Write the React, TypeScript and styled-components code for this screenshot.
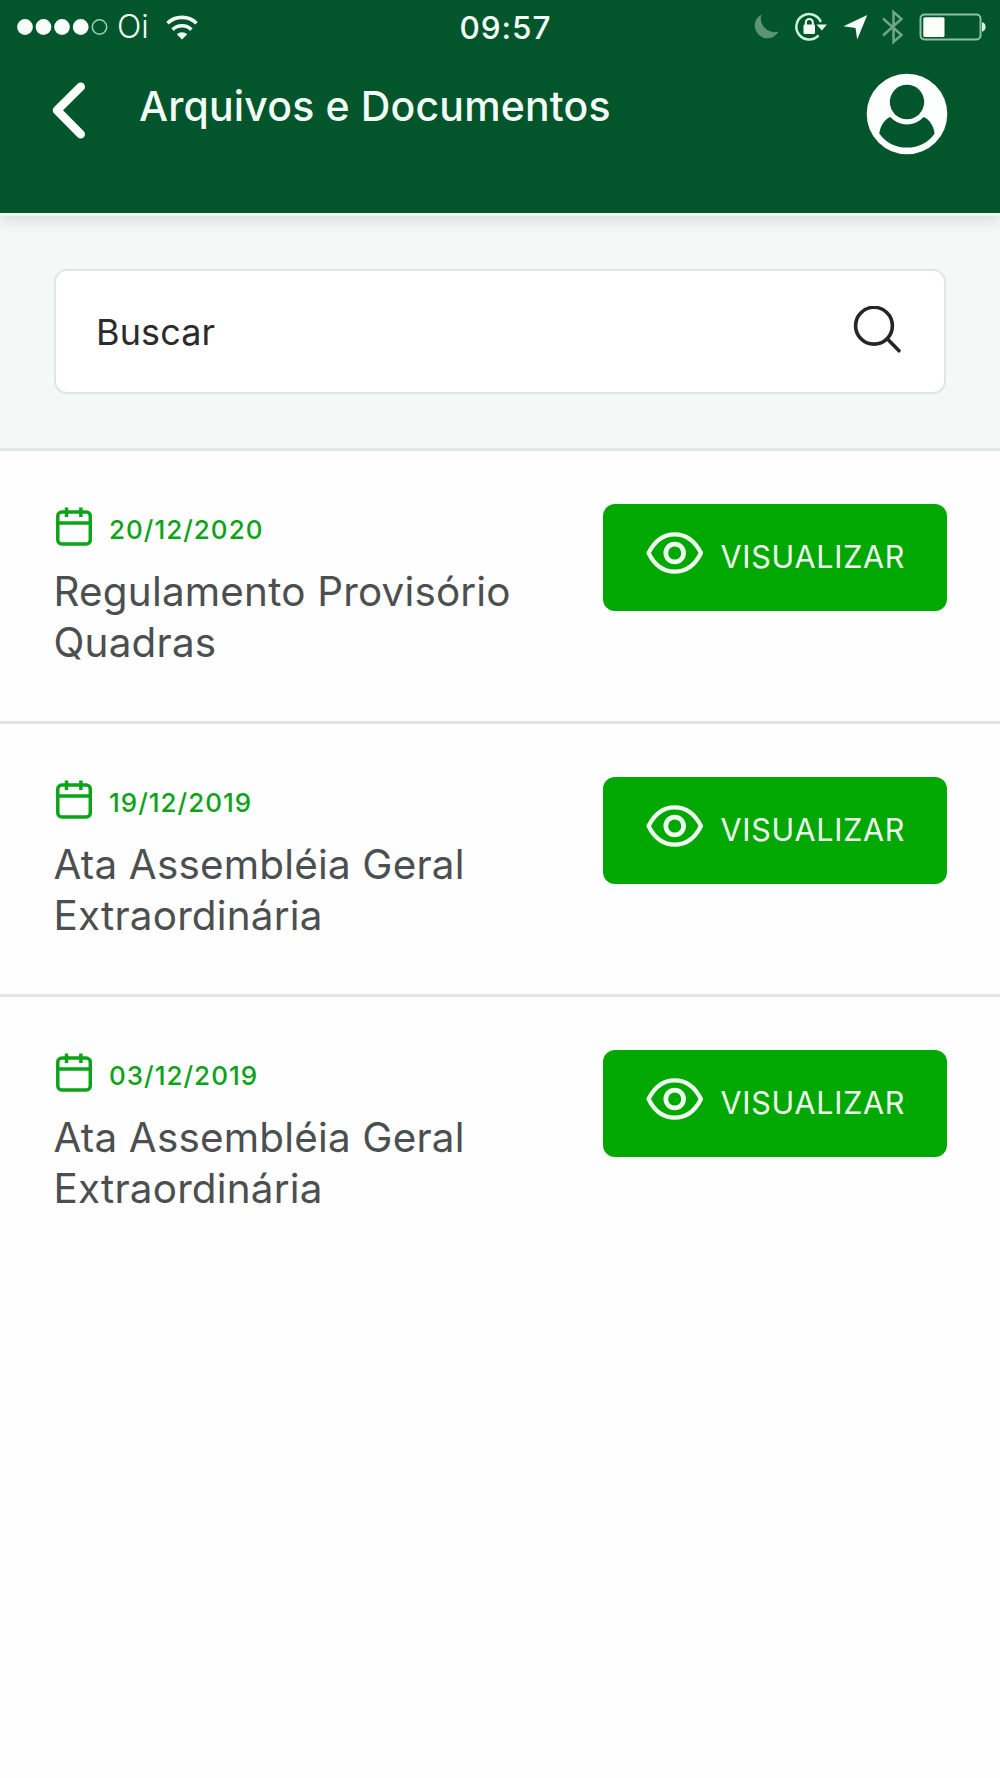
import React from "react";
import styled, { createGlobalStyle } from "styled-components";

const GlobalStyle = createGlobalStyle`
  * { box-sizing: border-box; }
  body {
    margin: 0;
    background: #fefefe;
    font-family: Inter, "Liberation Sans", sans-serif;
  }
  svg { display: block; flex: none; }
`;

const Screen = styled.div`
  width: 1000px;
  min-height: 1778px;
  background: #fefefe;
`;

const Header = styled.header`
  position: relative;
  z-index: 1;
  height: 213px;
  background: #03552c;
  box-shadow: 0 3px 0 #edf9f5, 0 10px 12px -1px rgba(0, 0, 0, 0.1);
`;

const StatusBar = styled.div`
  display: grid;
  grid-template-columns: 1fr auto 1fr;
  align-items: center;
  height: 54px;
  padding: 0 13px 0 16px;
  color: #f4fff8;
`;

const Carrier = styled.div`
  display: flex;
  align-items: center;
`;

const CarrierName = styled.span`
  margin: 0 16px 0 7px;
  font-size: 32px;
  font-weight: 300;
  line-height: 38px;
`;

const Clock = styled.time`
  padding: 1px 0 0 8px;
  font-size: 31.5px;
  font-weight: 500;
  line-height: 38px;
  letter-spacing: 1px;
`;

const StatusIcons = styled.div`
  display: flex;
  justify-content: flex-end;
`;

const NavBar = styled.nav`
  display: flex;
  align-items: flex-start;
  padding: 19px 52px 0;
`;

const IconButton = styled.button`
  padding: 0;
  border: 0;
  background: none;
`;

const BackButton = styled(IconButton)`
  margin-top: 8px;
`;

const PageTitle = styled.h1`
  flex: 1;
  margin: 8px 0 0 53px;
  color: #f4fff8;
  font-size: 41px;
  font-weight: 500;
  line-height: 50px;
  letter-spacing: 0.16px;
  white-space: nowrap;
`;

const SearchPanel = styled.section`
  height: 238px;
  padding: 56px 54px 0;
  background: #f4f8f7;
  border-bottom: 3px solid #dfe7e5;
`;

const SearchField = styled.label`
  display: flex;
  align-items: center;
  justify-content: space-between;
  height: 125px;
  padding: 0 42px 2px 40px;
  background: #fff;
  border: 2.5px solid #dde7e4;
  border-radius: 13px;
`;

const SearchText = styled.span`
  padding-top: 2px;
  color: #2b2b2b;
  font-size: 36px;
  line-height: 44px;
  letter-spacing: 0.1px;
`;

const List = styled.ul`
  margin: 0;
  padding: 0;
  list-style: none;
`;

const Row = styled.li`
  display: flex;
  justify-content: space-between;
  align-items: flex-start;
  height: 273px;
  padding: 53px 53px 0 54px;
  border-bottom: 3px solid #dfe6e5;

  &:last-child { border-bottom: 0; }
`;

const Details = styled.div`
  width: 500px;
`;

const DateLine = styled.div`
  display: flex;
  align-items: center;
  gap: 17px;
  height: 44px;
  padding-left: 2px;
  color: #0ba318;
`;

const DateText = styled.time`
  padding-top: 7px;
  font-size: 26px;
  font-weight: 500;
  line-height: 32px;
  letter-spacing: 1px;
`;

const DocumentName = styled.h2`
  margin: 18px 0 0 -0.5px;
  color: #4c4f50;
  font-size: 40.4px;
  font-weight: 400;
  line-height: 51px;
  letter-spacing: 0.2px;
  white-space: pre-line;
`;

const ViewButton = styled.button`
  display: flex;
  align-items: center;
  width: 344px;
  height: 107px;
  padding: 0 0 2px 43px;
  border: 0;
  border-radius: 12px;
  background: #02a802;
  color: #f0fff0;
`;

const ButtonLabel = styled.span`
  margin-left: 16.5px;
  font-family: Inter, "Liberation Sans", sans-serif;
  font-size: 30.5px;
  font-weight: 400;
  line-height: 38px;
  letter-spacing: 0.75px;
`;

const EyeSlot = styled.span`
  margin-bottom: 7px;
`;

const SignalIcon = () => (
  <svg width="94" height="18" viewBox="16 18 94 18">
    {[25, 43.5, 62, 80.7].map((x) => (
      <circle key={x} cx={x} cy="27" r="7.9" fill="#f8fffb" />
    ))}
    <circle cx="99.5" cy="27" r="7.2" fill="none" stroke="#9fd0b4" strokeWidth="1.5" />
  </svg>
);

const WifiIcon = () => (
  <svg width="34" height="26" viewBox="165 13 34 26" fill="none" stroke="#f4fff8" strokeWidth="3.6">
    <path d="M167.5 22.2a21 21 0 0 1 29 0M172.6 28.6a13.5 13.5 0 0 1 18.8 0" />
    <path d="M176.8 33.2a8 8 0 0 1 10.4 0L182 38.6z" fill="#f4fff8" stroke="none" />
  </svg>
);

const SystemIcons = () => (
  <svg width="234" height="38" viewBox="753 8 234 38" fill="none">
    <path d="M761.5 14.5A12.6 12.6 0 1 0 778.5 31.5A13.6 13.6 0 0 1 761.5 14.5z" fill="#5b9476" />
    <path d="M820.8 22A12.7 12.7 0 1 0 818.5 35.3" stroke="#c9f3d9" strokeWidth="2.5" />
    <path d="M816.5 24.5h10.5l-5.2 6z" fill="#e4ffef" />
    <rect x="803.5" y="24.5" width="11.5" height="9.5" rx="1.2" fill="#f4fff8" />
    <path d="M805.8 25v-2.6a3.5 3.5 0 0 1 7 0V25" stroke="#f4fff8" strokeWidth="2" />
    <path d="M867.3 15L843.5 26.3L855.5 28L857.2 39.5z" fill="#f8fffb" />
    <path d="M883 18.5L901.5 35L893.5 42V12L901.5 19L883 35.5" stroke="#6fa588" strokeWidth="2.5" />
    <rect x="920.5" y="14.6" width="60" height="24.8" rx="4" stroke="#8fc1a4" strokeWidth="2" />
    <rect x="923.3" y="17.2" width="21.2" height="19.8" rx="1.5" fill="#fafffc" />
    <path d="M982 22.3c2.4.5 3.6 2.2 3.6 4.7s-1.2 4.2-3.6 4.7z" fill="#d5f7e2" />
  </svg>
);

const BackIcon = () => (
  <svg width="34" height="60" viewBox="53 81 34 60" fill="none" stroke="#fafffc" strokeWidth="8.6" strokeLinecap="round" strokeLinejoin="round">
    <path d="M81.7 86.7L58 110.3L81.7 134.3" />
  </svg>
);

const AvatarIcon = () => (
  <svg width="82" height="82" viewBox="866 73 82 82">
    <circle cx="907" cy="114" r="40.3" fill="#fdfffe" />
    <circle cx="907" cy="102" r="17.2" fill="#03552c" />
    <path d="M890.2 117C884.5 119.5 880.5 125.5 879.3 133.4C885.5 142.5 895.5 147.6 907 147.6S928.5 142.5 934.6 133.4C933.5 125.5 929.5 119.5 923.7 117A22.6 22.6 0 0 1 890.2 117z" fill="#03552c" />
  </svg>
);

const SearchIcon = () => (
  <svg width="50" height="50" viewBox="852 306 50 50" fill="none" stroke="#262626" strokeWidth="3.6" strokeLinecap="round">
    <circle cx="874" cy="325.7" r="18.4" />
    <path d="M887.5 339L899 350.8" />
  </svg>
);

const CalendarIcon = () => (
  <svg width="36" height="40" viewBox="57 506 36 40" fill="none" stroke="currentColor" strokeWidth="3.5">
    <rect x="58.8" y="512" width="32.5" height="32" rx="4" />
    <path d="M58.8 523H91M67.5 507.5V517M81.9 507.5V517" />
  </svg>
);

const EyeIcon = () => (
  <svg width="58" height="44" viewBox="646 531 58 44" fill="none" stroke="currentColor" strokeWidth="4.2">
    <path d="M648.5 553C654.5 541 663.5 534.3 674.7 534.3S695 541 701 553C695 565 686 571.7 674.7 571.7S654.5 565 648.5 553z" strokeLinejoin="round" />
    <circle cx="674.7" cy="553" r="8.9" strokeWidth="4.7" />
  </svg>
);

const documents = [
  { date: "20/12/2020", name: "Regulamento Provisório\nQuadras" },
  { date: "19/12/2019", name: "Ata Assembléia Geral\nExtraordinária" },
  { date: "03/12/2019", name: "Ata Assembléia Geral\nExtraordinária" },
];

export default function App() {
  return (
    <Screen>
      <GlobalStyle />
      <Header>
        <StatusBar>
          <Carrier>
            <SignalIcon />
            <CarrierName>Oi</CarrierName>
            <WifiIcon />
          </Carrier>
          <Clock>09:57</Clock>
          <StatusIcons>
            <SystemIcons />
          </StatusIcons>
        </StatusBar>
        <NavBar>
          <BackButton aria-label="Voltar">
            <BackIcon />
          </BackButton>
          <PageTitle>Arquivos e Documentos</PageTitle>
          <IconButton aria-label="Perfil">
            <AvatarIcon />
          </IconButton>
        </NavBar>
      </Header>
      <SearchPanel>
        <SearchField>
          <SearchText>Buscar</SearchText>
          <SearchIcon />
        </SearchField>
      </SearchPanel>
      <List>
        {documents.map((doc) => (
          <Row key={doc.date}>
            <Details>
              <DateLine>
                <CalendarIcon />
                <DateText>{doc.date}</DateText>
              </DateLine>
              <DocumentName>{doc.name}</DocumentName>
            </Details>
            <ViewButton>
              <EyeSlot>
                <EyeIcon />
              </EyeSlot>
              <ButtonLabel>VISUALIZAR</ButtonLabel>
            </ViewButton>
          </Row>
        ))}
      </List>
    </Screen>
  );
}
